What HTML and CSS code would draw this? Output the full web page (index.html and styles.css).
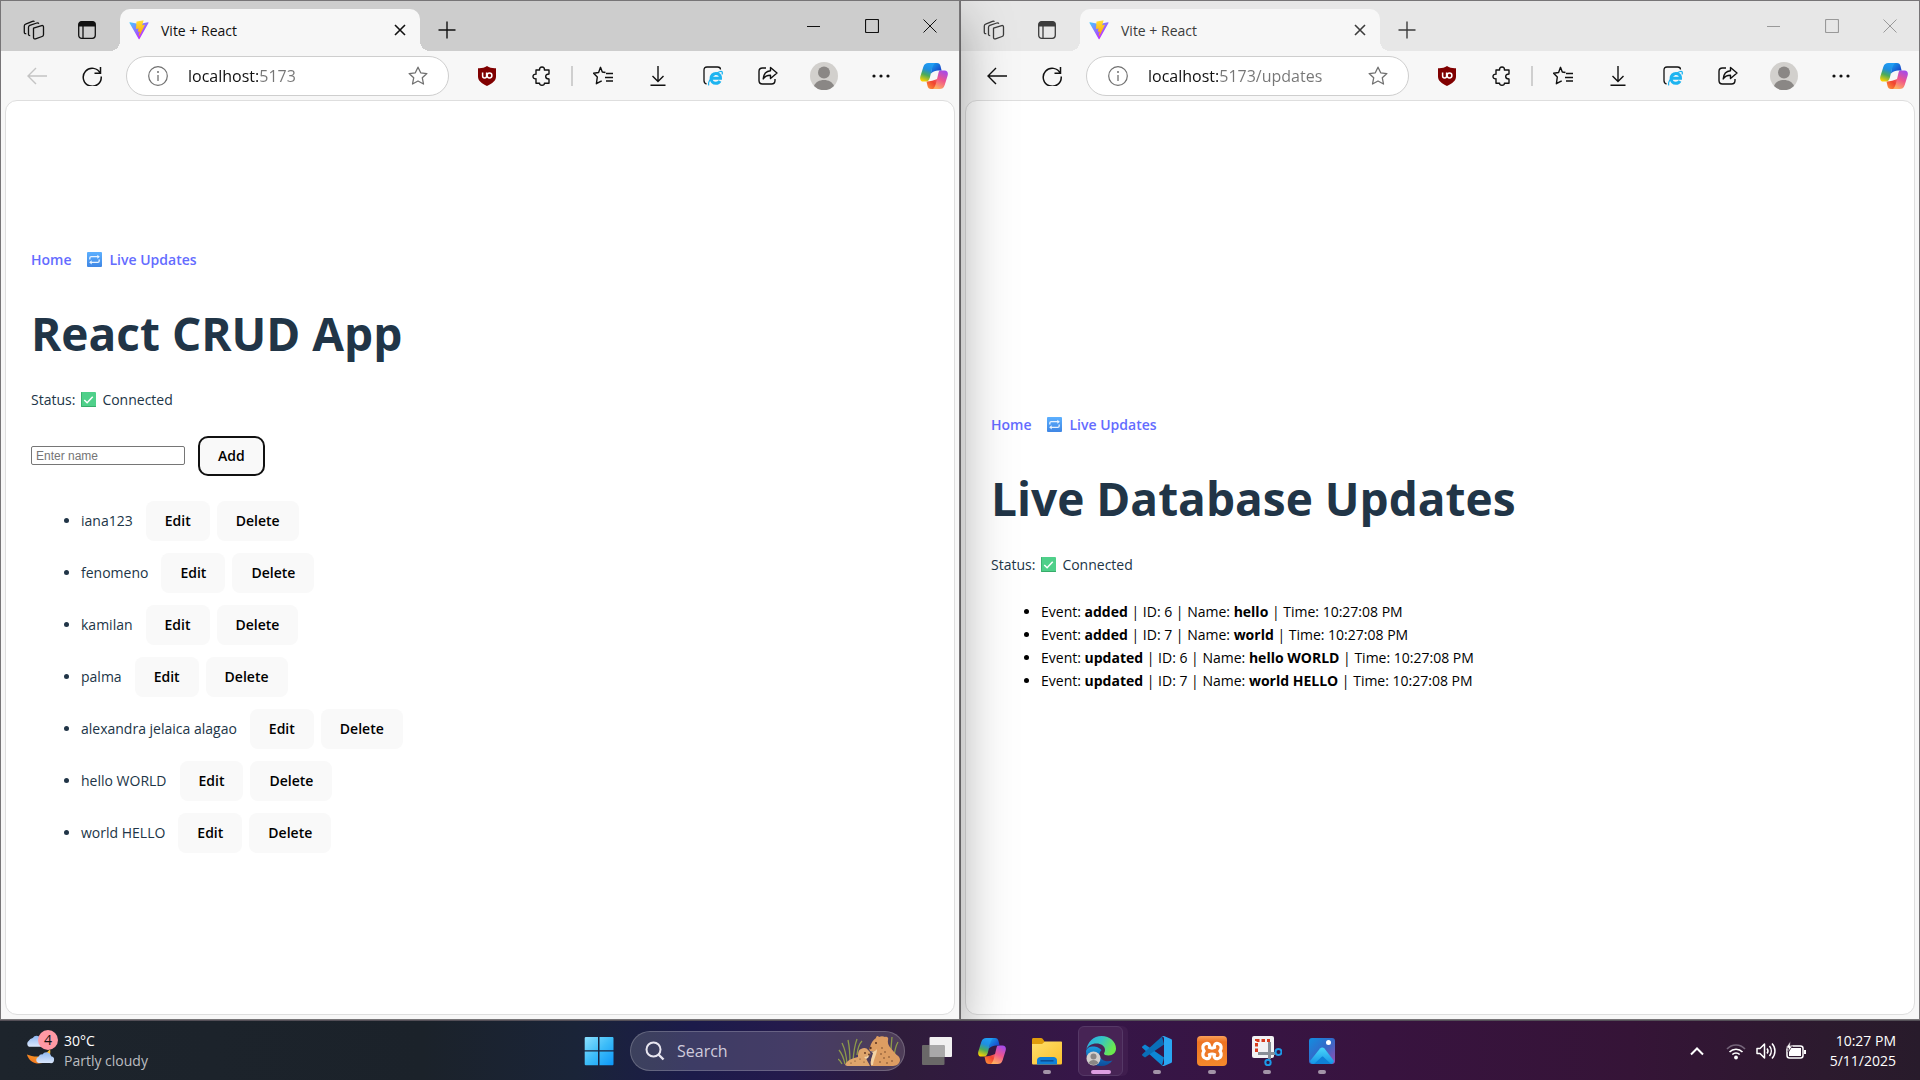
FILE: index.html
```html
<!DOCTYPE html>
<html lang="en">
<head>
<meta charset="utf-8">
<meta name="viewport" content="width=device-width, initial-scale=1">
<title>Vite + React</title>
<link rel="stylesheet" href="styles.css">
</head>
<body>
<svg class="sprite" aria-hidden="true">
  <defs>
    <linearGradient id="viteA" x1="6" y1="33" x2="235" y2="344" gradientUnits="userSpaceOnUse"><stop stop-color="#41D1FF"/><stop offset="1" stop-color="#BD34FE"/></linearGradient>
    <linearGradient id="viteB" x1="194" y1="9" x2="236" y2="293" gradientUnits="userSpaceOnUse"><stop stop-color="#FFEA83"/><stop offset=".08" stop-color="#FFDD35"/><stop offset="1" stop-color="#FFA800"/></linearGradient>
    <linearGradient id="copA" x1="0.6" y1="0" x2="0.3" y2="1"><stop stop-color="#1f9df5"/><stop offset=".35" stop-color="#1f8fe0"/><stop offset=".65" stop-color="#4cab5a"/><stop offset="1" stop-color="#fbd100"/></linearGradient>
    <linearGradient id="copB" x1="0" y1="0" x2="1" y2="1"><stop stop-color="#15a5f0"/><stop offset="1" stop-color="#1a2fc0"/></linearGradient>
    <linearGradient id="copC" x1="0.7" y1="0" x2="0.3" y2="1"><stop stop-color="#a54bea"/><stop offset=".5" stop-color="#f0568a"/><stop offset="1" stop-color="#ffb060"/></linearGradient>
    <linearGradient id="copD" x1="0" y1="1" x2="1" y2="0"><stop stop-color="#ff9c3a"/><stop offset=".6" stop-color="#f0432f"/><stop offset="1" stop-color="#ef5f7e"/></linearGradient>
    <linearGradient id="winG" x1="0" y1="0" x2="1" y2="1"><stop stop-color="#8be0ff"/><stop offset=".5" stop-color="#3cbcf8"/><stop offset="1" stop-color="#0c96f8"/></linearGradient>
    <linearGradient id="foldG" x1="0" y1="0" x2="1" y2="1"><stop stop-color="#ffdf6b"/><stop offset="1" stop-color="#fbc02d"/></linearGradient>
    <linearGradient id="edgeG" x1="0" y1="0" x2="1" y2=".4"><stop stop-color="#2aa8e8"/><stop offset=".5" stop-color="#34c4c8"/><stop offset="1" stop-color="#6be84e"/></linearGradient>
    <linearGradient id="edgeB" x1="0" y1="0" x2="0" y2="1"><stop stop-color="#1b9ae0"/><stop offset="1" stop-color="#0c4c9c"/></linearGradient>
    <linearGradient id="photoG" x1="0" y1="0" x2="1" y2="1"><stop stop-color="#128ee0"/><stop offset=".5" stop-color="#3468c8"/><stop offset="1" stop-color="#9a4dae"/></linearGradient>
    <linearGradient id="photoM" x1="0" y1="0" x2="0" y2="1"><stop stop-color="#4ad8fb"/><stop offset="1" stop-color="#1593e6"/></linearGradient>
    <linearGradient id="xamG" x1="0" y1="0" x2="0" y2="1"><stop stop-color="#f9a05a"/><stop offset=".2" stop-color="#ee7322"/><stop offset="1" stop-color="#f58a2c"/></linearGradient>
    <linearGradient id="cloudG" x1="0" y1="0" x2="0" y2="1"><stop stop-color="#8fb8f2"/><stop offset="1" stop-color="#dbe7fc"/></linearGradient>
    <linearGradient id="moonG" x1="0" y1="1" x2="1" y2="0"><stop stop-color="#f26a1b"/><stop offset="1" stop-color="#fdc534"/></linearGradient>
    <linearGradient id="blueTile" x1="0" y1="0" x2="0" y2="1"><stop stop-color="#5cb0ff"/><stop offset="1" stop-color="#3f86e4"/></linearGradient>
  </defs>
  <symbol id="i-spaces" viewBox="0 0 22 20"><g fill="none" stroke="currentColor" stroke-width="1.3" stroke-linejoin="round"><path d="M10.500 8.200l8.200-2.600c1-.3 1.800.3 1.800 1.300v7.600c0 1-.5 1.700-1.400 2l-6.600 2.300c-1.100.4-2-.2-2-1.300z"/><path d="M7.200 15.600c-.9.100-1.700-.4-1.700-1.400V7.300c0-1 .5-1.600 1.300-1.900l7-2.400c1-.3 1.700 0 2 .8"/><path d="M3.300 13.600c-1.300.3-2-.3-2-1.300V6c0-1 .5-1.600 1.300-1.900L9.500 1.300c.9-.3 1.600-.1 1.900.5"/></g></symbol>
  <symbol id="i-tabs" viewBox="0 0 18 18"><rect x=".7" y=".7" width="16.600" height="16.600" rx="3" fill="none" stroke="currentColor" stroke-width="1.300"/><path d="M.7 5.500V3.500a3 3 0 0 1 3-3h10.600a3 3 0 0 1 3 3v2z" fill="currentColor"/><path d="M5 5v12" stroke="currentColor" stroke-width="1.300"/></symbol>
  <symbol id="i-vite" viewBox="0 0 410 404"><path fill="url(#viteA)" d="M399.641 59.525L215.643 388.545C211.844 395.338 202.084 395.378 198.228 388.618L10.582 59.556C6.381 52.190 12.680 43.267 21.028 44.759L205.223 77.682C206.398 77.892 207.601 77.890 208.776 77.676L389.119 44.806C397.439 43.289 403.768 52.143 399.641 59.525Z"/><path fill="url(#viteB)" d="M292.965 1.574L156.801 28.255C154.563 28.694 152.906 30.590 152.771 32.866L144.395 174.330C144.198 177.662 147.258 180.248 150.510 179.498L188.420 170.749C191.967 169.931 195.172 173.055 194.443 176.622L183.180 231.775C182.422 235.487 185.907 238.661 189.532 237.560L212.947 230.446C216.577 229.344 220.065 232.527 219.297 236.242L201.398 322.875C200.278 328.294 207.486 331.249 210.492 326.603L212.500 323.500L323.454 102.072C325.312 98.365 322.108 94.137 318.036 94.923L279.014 102.454C275.347 103.161 272.227 99.746 273.262 96.158L298.731 7.867C299.767 4.273 296.636 .855 292.965 1.574Z"/></symbol>
  <symbol id="i-x" viewBox="0 0 12 12"><path d="M1 1l10 10M11 1L1 11" stroke="currentColor" stroke-width="1.600" fill="none"/></symbol>
  <symbol id="i-plus" viewBox="0 0 18 18"><path d="M9 .5v17M.5 9h17" stroke="currentColor" stroke-width="1.400"/></symbol>
  <symbol id="i-min" viewBox="0 0 14 14"><path d="M0 7.500h13" stroke="currentColor"/></symbol>
  <symbol id="i-max" viewBox="0 0 14 14"><rect x=".5" y=".5" width="13" height="13" rx="1" fill="none" stroke="currentColor" stroke-width="1.200"/></symbol>
  <symbol id="i-close" viewBox="0 0 14 14"><path d="M.5 .5l13 13M13.500 .5l-13 13" stroke="currentColor" fill="none"/></symbol>
  <symbol id="i-back" viewBox="0 0 20 18"><path d="M20 9H1M9 1L1 9l8 8" stroke="currentColor" stroke-width="1.400" fill="none"/></symbol>
  <symbol id="i-reload" viewBox="0 0 20 20"><path d="M18.400 7.500A9 9 0 1 0 19.200 10.500M18.500 1v6.300h-6" stroke="currentColor" stroke-width="1.500" fill="none"/></symbol>
  <symbol id="i-info" viewBox="0 0 20 20"><circle cx="10" cy="10" r="9.300" fill="none" stroke="#707070" stroke-width="1.200"/><path d="M10 9v6" stroke="#707070" stroke-width="1.300"/><circle cx="10" cy="6" r="1" fill="#707070"/></symbol>
  <symbol id="i-star" viewBox="0 0 20 20"><path d="M10 1.200l2.700 5.600 6.200.8-4.600 4.200 1.200 6.200L10 15l-5.500 3 1.200-6.200L1.100 7.600l6.200-.8z" fill="none" stroke="#707070" stroke-width="1.300" stroke-linejoin="round"/></symbol>
  <symbol id="i-shield" viewBox="0 0 18 20"><path d="M9 0c2.500 1.700 5.500 2.400 9 2.200v8.300c0 4.200-3.600 6.900-9 9.500-5.400-2.600-9-5.300-9-9.500V2.200C3.500 2.400 6.500 1.700 9 0z" fill="#800000"/><path d="M4.600 6.500v3.600a2 2 0 0 0 4 0V6.500" fill="none" stroke="#fff" stroke-width="1.500"/><circle cx="11.500" cy="9.500" r="2.400" fill="none" stroke="#fff" stroke-width="1.500"/></symbol>
  <symbol id="i-puzzle" viewBox="0 0 20 20"><path d="M4 4h3.600c-.3-2 .8-3 2.400-3s2.700 1 2.400 3H17v4c-2 0-3.300.8-3.300 2.500S15 13 17 13v4.200h-4.600c.2 1.400-.8 2-2.400 2s-2.600-.6-2.400-2H4v-4.400c-2 .2-3-.8-3-2.300S2 8 4 8.200z" fill="none" stroke="currentColor" stroke-width="1.400" stroke-linejoin="round"/></symbol>
  <symbol id="i-favs" viewBox="0 0 20 20"><path d="M12.500 6.500L9.300 6 7.500 1.300 5.600 6.500l-5 .7 3.700 3.900-.9 6.600 5.300-2.900M13 7.500h7M12 11.500h8M13 15h7" fill="none" stroke="currentColor" stroke-width="1.400" stroke-linejoin="round"/></symbol>
  <symbol id="i-down" viewBox="0 0 16 20"><path d="M8 0v15.500M2.500 10L8 15.500l5.500-5.500M.5 19.300h15" fill="none" stroke="currentColor" stroke-width="1.400"/></symbol>
  <symbol id="i-ie" viewBox="0 0 20 20"><path d="M3.500 18C1.500 17.500 1 16 1 14.500V4c0-2 1-3 3-3h10.500c2 0 3 .8 3 2.500" fill="none" stroke="currentColor" stroke-width="1.300"/><path d="M8.500 12.300h9c.1-3-1.800-4.900-4.600-4.900s-4.800 2-4.800 4.900 1.900 5 4.800 5c2 0 3.400-.9 4.100-2.300" fill="none" stroke="#1eb4f0" stroke-width="3"/><path d="M6 19.400c-1.500-1.700 1-7 5-10.400s7.700-4.400 8.300-2.800c.3.700.1 1.400-.4 2.300" fill="none" stroke="#1eb4f0" stroke-width="1.200"/></symbol>
  <symbol id="i-share" viewBox="0 0 20 20"><path d="M8 2H4.500C2.300 2 1 3.300 1 5.500v9C1 16.700 2.300 18 4.500 18h9c2.200 0 3.500-1.300 3.500-3.500V13" fill="none" stroke="currentColor" stroke-width="1.400"/><path d="M12.500 1.500L19 7l-6.500 5.500V9.300c-3.600 0-5.700 1-7.300 3.700.4-4.800 3-7.900 7.300-8.200z" fill="none" stroke="currentColor" stroke-width="1.400" stroke-linejoin="round"/></symbol>
  <symbol id="i-user" viewBox="0 0 28 28"><circle cx="14" cy="14" r="14" fill="#d2d0cd"/><circle cx="14" cy="10.500" r="6" fill="#8a8785"/><path d="M4 24c1.500-4 5.500-6 10-6s8.500 2 10 6a14 14 0 0 1-20 0z" fill="#8a8785"/></symbol>
  <symbol id="i-dots" viewBox="0 0 18 4"><g fill="currentColor"><circle cx="2" cy="2" r="1.600"/><circle cx="9" cy="2" r="1.600"/><circle cx="16" cy="2" r="1.600"/></g></symbol>
  <symbol id="i-copilot" viewBox="0 0 28 27"><path fill="url(#copD)" d="M16 26.500h-5c-2 0-3-1-3.500-3L6.500 19c4 0 7-1 12-3z"/><path fill="url(#copC)" d="M20 8h4.500c3 0 3.900 2.300 3.100 5.300L24.700 22.500c-1 3-2.500 4-5 4H13c2-1.700 2.700-4.500 3.700-8.500l1.400-6c.6-2.700 1-4 1.900-4z"/><path fill="url(#copB)" d="M12 .5h5c2 0 3 1 3.500 3L21.600 8H18c-2.500 0-4.500.7-7 3z"/><path fill="url(#copA)" d="M8.200 .5H15c-2 1.700-2.700 4.500-3.700 8.500L9.900 15c-.7 2.800-1.900 4-3.900 4H3.500c-3 0-3.900-2.300-3.100-5.300L3.300 4.500c1-3 2.500-4 4.900-4z"/></symbol>
  <symbol id="i-repeat" viewBox="0 0 16 16"><rect width="16" height="16" rx="1" fill="url(#blueTile)"/><path d="M3 8V6.500C3 5.500 3.500 5 4.500 5H12M13 8v1.500c0 1-.5 1.500-1.500 1.500H4" stroke="#e8f3ff" stroke-width="1.400" fill="none"/><path d="M11 2.800L13.700 5 11 7.200zM5 8.800L2.300 11 5 13.200z" fill="#e8f3ff"/></symbol>
  <symbol id="i-check" viewBox="0 0 16 16"><rect width="16" height="16" rx="1" fill="#4fd08a"/><path d="M.3 0v15.500H16" stroke="#35a768" stroke-width="1" fill="none"/><path d="M3.500 8.500l3 3 6-6.500" stroke="#fff" stroke-width="1.600" fill="none"/></symbol>
</svg>

<main class="desktop">
  <section class="window window--active">
    <header class="titlebar">
      <div class="titlebar__tools">
        <button class="icon-btn" aria-label="Workspaces"><svg class="ic22"><use href="#i-spaces"/></svg></button>
        <button class="icon-btn" aria-label="Tab actions"><svg class="ic18"><use href="#i-tabs"/></svg></button>
      </div>
      <div class="tab">
        <svg class="ic20"><use href="#i-vite"/></svg>
        <span class="tab__title">Vite + React</span>
        <button class="tab__close" aria-label="Close tab"><svg class="ic12"><use href="#i-x"/></svg></button>
      </div>
      <button class="icon-btn" aria-label="New tab"><svg class="ic18"><use href="#i-plus"/></svg></button>
      <div class="caption">
        <button class="icon-btn" aria-label="Minimize"><svg class="ic14"><use href="#i-min"/></svg></button>
        <button class="icon-btn" aria-label="Maximize"><svg class="ic14"><use href="#i-max"/></svg></button>
        <button class="icon-btn" aria-label="Close"><svg class="ic14"><use href="#i-close"/></svg></button>
      </div>
    </header>
    <nav class="toolbar" aria-label="Browser toolbar">
      <button class="icon-btn" aria-label="Back" disabled><svg class="ic20"><use href="#i-back"/></svg></button>
      <button class="icon-btn" aria-label="Refresh"><svg class="ic20"><use href="#i-reload"/></svg></button>
      <div class="address">
        <svg class="ic20"><use href="#i-info"/></svg>
        <input class="address__input" type="text" aria-label="Address" value="localhost:5173">
        <svg class="ic20"><use href="#i-star"/></svg>
      </div>
      <button class="icon-btn" aria-label="uBlock Origin"><svg class="ic20"><use href="#i-shield"/></svg></button>
      <button class="icon-btn" aria-label="Extensions"><svg class="ic20"><use href="#i-puzzle"/></svg></button>
      <span class="toolbar__sep"></span>
      <button class="icon-btn" aria-label="Favorites"><svg class="ic20"><use href="#i-favs"/></svg></button>
      <button class="icon-btn" aria-label="Downloads"><svg class="ic20"><use href="#i-down"/></svg></button>
      <button class="icon-btn" aria-label="Internet Explorer mode"><svg class="ic20"><use href="#i-ie"/></svg></button>
      <button class="icon-btn" aria-label="Share"><svg class="ic20"><use href="#i-share"/></svg></button>
      <button class="icon-btn icon-btn--wide" aria-label="Profile"><svg class="ic28"><use href="#i-user"/></svg></button>
      <button class="icon-btn icon-btn--wide" aria-label="Settings and more"><svg class="ic18"><use href="#i-dots"/></svg></button>
      <button class="icon-btn icon-btn--last" aria-label="Copilot"><svg class="ic28"><use href="#i-copilot"/></svg></button>
    </nav>
    <div class="page">
      <nav class="links">
        <a href="#home">Home</a>
        <a href="#updates"><svg class="emoji"><use href="#i-repeat"/></svg>Live Updates</a>
      </nav>
      <h1>React CRUD App</h1>
      <p class="status">Status: <svg class="emoji"><use href="#i-check"/></svg>Connected</p>
      <form class="add-form">
        <input class="name-input" type="text" placeholder="Enter name" aria-label="Name">
        <button class="btn btn--focus" type="button">Add</button>
      </form>
      <ul class="people">
        <li><div class="person"><span>iana123</span><button class="btn">Edit</button><button class="btn">Delete</button></div></li>
        <li><div class="person"><span>fenomeno</span><button class="btn">Edit</button><button class="btn">Delete</button></div></li>
        <li><div class="person"><span>kamilan</span><button class="btn">Edit</button><button class="btn">Delete</button></div></li>
        <li><div class="person"><span>palma</span><button class="btn">Edit</button><button class="btn">Delete</button></div></li>
        <li><div class="person"><span>alexandra jelaica alagao</span><button class="btn">Edit</button><button class="btn">Delete</button></div></li>
        <li><div class="person"><span>hello WORLD</span><button class="btn">Edit</button><button class="btn">Delete</button></div></li>
        <li><div class="person"><span>world HELLO</span><button class="btn">Edit</button><button class="btn">Delete</button></div></li>
      </ul>
    </div>
  </section>

  <section class="window">
    <header class="titlebar">
      <div class="titlebar__tools">
        <button class="icon-btn" aria-label="Workspaces"><svg class="ic22"><use href="#i-spaces"/></svg></button>
        <button class="icon-btn" aria-label="Tab actions"><svg class="ic18"><use href="#i-tabs"/></svg></button>
      </div>
      <div class="tab">
        <svg class="ic20"><use href="#i-vite"/></svg>
        <span class="tab__title">Vite + React</span>
        <button class="tab__close" aria-label="Close tab"><svg class="ic12"><use href="#i-x"/></svg></button>
      </div>
      <button class="icon-btn" aria-label="New tab"><svg class="ic18"><use href="#i-plus"/></svg></button>
      <div class="caption">
        <button class="icon-btn" aria-label="Minimize"><svg class="ic14"><use href="#i-min"/></svg></button>
        <button class="icon-btn" aria-label="Maximize"><svg class="ic14"><use href="#i-max"/></svg></button>
        <button class="icon-btn" aria-label="Close"><svg class="ic14"><use href="#i-close"/></svg></button>
      </div>
    </header>
    <nav class="toolbar" aria-label="Browser toolbar">
      <button class="icon-btn" aria-label="Back"><svg class="ic20"><use href="#i-back"/></svg></button>
      <button class="icon-btn" aria-label="Refresh"><svg class="ic20"><use href="#i-reload"/></svg></button>
      <div class="address">
        <svg class="ic20"><use href="#i-info"/></svg>
        <input class="address__input" type="text" aria-label="Address" value="localhost:5173/updates">
        <svg class="ic20"><use href="#i-star"/></svg>
      </div>
      <button class="icon-btn" aria-label="uBlock Origin"><svg class="ic20"><use href="#i-shield"/></svg></button>
      <button class="icon-btn" aria-label="Extensions"><svg class="ic20"><use href="#i-puzzle"/></svg></button>
      <span class="toolbar__sep"></span>
      <button class="icon-btn" aria-label="Favorites"><svg class="ic20"><use href="#i-favs"/></svg></button>
      <button class="icon-btn" aria-label="Downloads"><svg class="ic20"><use href="#i-down"/></svg></button>
      <button class="icon-btn" aria-label="Internet Explorer mode"><svg class="ic20"><use href="#i-ie"/></svg></button>
      <button class="icon-btn" aria-label="Share"><svg class="ic20"><use href="#i-share"/></svg></button>
      <button class="icon-btn icon-btn--wide" aria-label="Profile"><svg class="ic28"><use href="#i-user"/></svg></button>
      <button class="icon-btn icon-btn--wide" aria-label="Settings and more"><svg class="ic18"><use href="#i-dots"/></svg></button>
      <button class="icon-btn icon-btn--last" aria-label="Copilot"><svg class="ic28"><use href="#i-copilot"/></svg></button>
    </nav>
    <div class="page">
      <nav class="links">
        <a href="#home">Home</a>
        <a href="#updates"><svg class="emoji"><use href="#i-repeat"/></svg>Live Updates</a>
      </nav>
      <h1>Live Database Updates</h1>
      <p class="status">Status: <svg class="emoji"><use href="#i-check"/></svg>Connected</p>
      <ul class="events">
        <li>Event: <strong>added</strong> | ID: 6 | Name: <strong>hello</strong> | Time: 10:27:08 PM</li>
        <li>Event: <strong>added</strong> | ID: 7 | Name: <strong>world</strong> | Time: 10:27:08 PM</li>
        <li>Event: <strong>updated</strong> | ID: 6 | Name: <strong>hello WORLD</strong> | Time: 10:27:08 PM</li>
        <li>Event: <strong>updated</strong> | ID: 7 | Name: <strong>world HELLO</strong> | Time: 10:27:08 PM</li>
      </ul>
    </div>
  </section>
</main>

<footer class="taskbar">
  <button class="weather">
    <span class="weather__art">
      <svg class="weather__icon" viewBox="0 0 32 32"><path d="M5 12h13a4 4 0 0 0 0-7 5 5 0 0 0-9-2 5 5 0 0 0-4 3 3.500 3.500 0 0 0 0 6z" fill="url(#cloudG)"/><path d="M3 20c2 7 9 11 16 9 6-2 9-8 8-14-3 2-5 6-10 7-6 1-10-1-14-2z" fill="url(#moonG)"/><path d="M15 29h12a3.500 3.500 0 0 0 1-7 5 5 0 0 0-9-2 4 4 0 0 0-4 2.500 3.400 3.400 0 0 0 0 6.500z" fill="url(#cloudG)"/></svg>
      <span class="badge">4</span>
    </span>
    <span class="weather__text"><span>30°C</span><span class="weather__sub">Partly cloudy</span></span>
  </button>

  <div class="dock">
    <button class="dock__app" aria-label="Start"><svg class="ic30" viewBox="0 0 30 30"><g fill="url(#winG)"><path d="M1.500 1H14v13.300H.7V1.800zM15.500 1h13.300l.7.800v12.500h-14zM.7 15.500H14v13.800H1.500l-.8-.8zM15.500 15.500h14v13l-.7.800H15.500z"/></g></svg></button>
    <label class="search">
      <svg class="ic20" viewBox="0 0 20 20"><circle cx="8.500" cy="8.500" r="7" fill="none" stroke="#e8e6f0" stroke-width="2"/><path d="M13.500 13.500l5 5" stroke="#e8e6f0" stroke-width="2.400"/></svg>
      <input class="search__input" type="text" placeholder="Search">
      <svg class="search__art" viewBox="0 0 62 32" aria-hidden="true">
        <g stroke="#8d9a4a" stroke-width="1.300" fill="none"><path d="M7 29Q5 20 1 15M9 29Q8 16 4 8M12 28Q12 14 10 5M15 26Q16 12 19 4M19 20Q20 10 24 6M4 29Q2 25 0 24M50 20Q49 10 47 4M53 20Q53 10 54 2M56 22Q57 12 60 7"/></g>
        <path d="M33 31c-1-5 1-9 3-13 0-2-1-2-4-2-1-2-1-3 0-4 1-4 3-7 6-9 0-2 2-3 3-1 2-1 4-1 6 0 2-1 4 1 3 3-1 5 3 8 6 12 3 4 6 4 6 8 0 3-3 6-7 6z" fill="#dd9d62"/>
        <path d="M7 30c2-5 8-7 13-8 0-3 0-7 3-8 3-2 6-1 7 1 2 2 3 3 2 5-1 1-3 1-4 2 0 3 3 6 4 9H9z" fill="#dfa56c"/>
        <path d="M32 16c2 1 5 1 7-2 0 5-3 9-4 16h-2c-1-4 1-8 2-12z" fill="#f3d3a4"/>
        <path d="M26 22c2 0 3-1 5-2 0 2-1 3-3 4z" fill="#f3d3a4"/>
        <g fill="#5d3520"><circle cx="38" cy="8" r="1"/><circle cx="32.500" cy="13" r="1.200"/><circle cx="27" cy="18" r=".9"/><circle cx="31" cy="19.500" r=".9"/><circle cx="44" cy="13" r=".7"/><circle cx="47" cy="17" r=".7"/><circle cx="43" cy="19" r=".7"/><circle cx="51" cy="22" r=".7"/><circle cx="46" cy="23" r=".7"/><circle cx="54" cy="26" r=".7"/><circle cx="49" cy="28" r=".7"/><circle cx="42" cy="27" r=".7"/><circle cx="17" cy="26" r=".6"/><circle cx="22" cy="24" r=".6"/><circle cx="26" cy="27" r=".6"/><circle cx="13" cy="28" r=".6"/></g>
      </svg>
    </label>
    <button class="dock__app" aria-label="Task view"><svg class="ic30" viewBox="0 0 30 30"><rect x="7.500" y="1" width="22.500" height="20" rx="1" fill="#f1f0f1"/><rect y="9" width="22.500" height="20" rx="1" fill="#6a6868"/><path d="M7.500 9h14a1 1 0 0 1 1 1v11h-15z" fill="#a9a8a9"/></svg></button>
    <button class="dock__app" aria-label="Copilot"><svg class="ic28"><use href="#i-copilot"/></svg></button>
    <button class="dock__app dock__app--open" aria-label="File Explorer"><svg class="ic30" viewBox="0 0 30 30"><path d="M0 3.500C0 2.500.6 2 1.500 2h7c1 0 1.600.3 2.300 1L13 6v6H0z" fill="#e09c0c"/><path d="M0 8h10l3-2.500h16c.6 0 1 .4 1 1V27c0 1-.6 1.500-1.500 1.500h-27C.6 28.500 0 28 0 27z" fill="url(#foldG)"/><path d="M5 28.500v-4c0-2 1.500-3.500 3.500-3.500h13c2 0 3.500 1.500 3.500 3.500v4z" fill="#1080d8"/><path d="M8.500 24.800h13" stroke="#0c4c94" stroke-width="1.500"/></svg></button>
    <button class="dock__app dock__app--open dock__app--active" aria-label="Microsoft Edge"><svg class="ic30" viewBox="0 0 30 30"><path d="M0 15c0 9 6.500 15 15 15 5 0 9-2 11.500-5.500-7 2.500-13-1-13-6 0-2 .8-3.300 2-4.300C13 10 2 8 0 15z" fill="url(#edgeB)"/><path d="M.3 14C1.500 6 7.500 0 15.500 0 24 0 30 6 30 12.500c0 4-3 7-7.500 7-3 0-4.500-1-4.500-2 0-.7 1-1.500 1-3.500C19 10 15 7.500 10.500 7.500 5.500 7.500 1.500 10 .3 14z" fill="url(#edgeG)"/><circle cx="7.500" cy="22.500" r="7" fill="#d2d0cd"/><circle cx="7.500" cy="20.500" r="3" fill="#8a8785"/><path d="M2.500 27c1-2 3-3 5-3s4 1 5 3a7 7 0 0 1-10 0z" fill="#8a8785"/></svg></button>
    <button class="dock__app dock__app--open" aria-label="Visual Studio Code"><svg class="ic30" viewBox="0 0 30 30"><path d="M3 8.500L.5 10.300c-.6.500-.6 1.200 0 1.700L20 29.500l2-8z" fill="#0d86d4"/><path d="M3 21.500L.5 19.700c-.6-.5-.6-1.200 0-1.700L20 .5l2 8z" fill="#0a6fb8"/><path d="M22 0l7 3c.7.300 1 .8 1 1.500v21c0 .7-.3 1.200-1 1.500l-7 3c-1 .3-2-.3-2.500-1 1.200.5 2.500.2 2.500-1.500v-25C22 .800 20.700.500 19.500 1c.5-.7 1.500-1.300 2.500-1z" fill="#2aa6f2"/></svg></button>
    <button class="dock__app dock__app--open" aria-label="XAMPP Control Panel"><svg class="ic30" viewBox="0 0 30 30"><rect width="30" height="30" rx="4" fill="url(#xamG)"/><path d="M9 7.500c3-1 4 2 3.500 4 1 .7 4 .7 5 0-.5-2 .5-5 3.500-4 3.500 1 4 4.500 2 7.500 2 3 1.500 6.500-2 7.500-3 .8-4.500-1.500-3.500-4-1-.7-4-.7-5 0 1 2.500-.5 4.800-3.500 4-3.500-1-4-4.500-2-7.500-2-3-1.500-6.500 2-7.500z" fill="#ee7a28" stroke="#fff" stroke-width="3.200"/></svg></button>
    <button class="dock__app dock__app--open" aria-label="Snipping Tool"><svg class="ic30" viewBox="0 0 30 30"><rect width="22" height="22" rx="2" fill="#f2f2f4"/><path d="M4.500 16V4.500H18" fill="none" stroke="#d83b1e" stroke-width="3" stroke-dasharray="3.500 2"/><path d="M17.500 6v17M6 17.500h17" stroke="#8a9098" stroke-width="3"/><circle cx="26.500" cy="16" r="3" fill="none" stroke="#1c9ae8" stroke-width="2"/><circle cx="16" cy="26.500" r="2.700" fill="none" stroke="#1c9ae8" stroke-width="2"/></svg></button>
    <button class="dock__app dock__app--open" aria-label="Photos"><svg class="ic26" viewBox="0 0 26 26"><rect width="26" height="26" rx="3" fill="url(#photoG)"/><path d="M1 23L11 10.500c1.500-1.500 3-1.500 4.500 0L25 23c-.5 2-1.500 3-3 3H4c-1.500 0-2.500-1-3-3z" fill="url(#photoM)"/><path d="M5 26l7.500-7c.8-.6 1.400-.6 2 0L22 26z" fill="#0f80d8"/><circle cx="19.500" cy="4.500" r="2.500" fill="#fff"/></svg></button>
  </div>

  <div class="tray">
    <button class="tray__btn" aria-label="Show hidden icons"><svg class="ic14" viewBox="0 0 14 14"><path d="M1 10.500l6-6 6 6" fill="none" stroke="#fff" stroke-width="2"/></svg></button>
    <button class="tray__group" aria-label="Network, volume and battery">
      <svg class="ic20" viewBox="0 0 20 20"><g fill="none" stroke="#fff" stroke-width="1.600"><path d="M1 8a12 12 0 0 1 18 0" stroke="#75657a"/><path d="M3.500 11a9 9 0 0 1 13 0M6.300 13.500a5.500 5.500 0 0 1 7.400 0"/></g><circle cx="10" cy="16.500" r="1.900" fill="#fff"/></svg>
      <svg class="ic20" viewBox="0 0 20 20"><g fill="none" stroke="#fff" stroke-width="1.500"><path d="M1 7.500h3L8.500 3v14L4 12.500H1z" stroke-linejoin="round"/><path d="M11 7.500a4 4 0 0 1 0 5M13.500 5a8 8 0 0 1 0 10M16 2.500a11 11 0 0 1 0 15"/></g></svg>
      <svg class="ic20" viewBox="0 0 20 20"><rect x="1" y="5" width="16" height="12" rx="2.500" fill="none" stroke="#fff" stroke-width="1.500"/><path d="M5 7h10v8H3v-4z" fill="#fff"/><path d="M18 9h2v4h-2z" fill="#fff"/><path d="M4.500 0L0 7h2.500L2 11l4.500-6H4z" fill="#fff" stroke="#2f1930" stroke-width=".6"/></svg>
    </button>
    <button class="clock"><span>10:27 PM</span><span>5/11/2025</span></button>
  </div>
</footer>
</body>
</html>
```

FILE: styles.css
```css
* { box-sizing: border-box; }

body {
  margin: 0;
  min-height: 100vh;
  display: grid;
  grid-template-columns: minmax(0, 1fr);
  grid-template-rows: 1fr auto;
  font-family: "Open Sans", "Noto Sans", sans-serif;
  font-size: 14px;
  color: #213547;
  background: #f7f7f7;
}

button {
  font: inherit;
  color: inherit;
  background: none;
  border: 0;
  padding: 0;
}

.sprite { position: absolute; width: 0; height: 0; }

.ic12 { width: 12px; height: 12px; }
.ic14 { width: 14px; height: 14px; }
.ic18 { width: 18px; height: 18px; }
.ic20 { width: 20px; height: 20px; flex: none; }
.ic22 { width: 22px; height: 20px; }
.ic26 { width: 26px; height: 26px; }
.ic28 { width: 28px; height: 28px; }
.ic30 { width: 30px; height: 30px; }

/* Browser windows */
.desktop {
  display: grid;
  grid-template-columns: repeat(2, minmax(0, 1fr));
}

.window {
  display: flex;
  flex-direction: column;
  border: 1px solid #777577;
  background: #f7f7f7;
  color: #3c3c3c;
}

.window--active {
  position: relative;
  z-index: 1;
  color: #111;
  box-shadow: 0 20px 50px rgba(0, 0, 0, .35);
}

.titlebar {
  display: flex;
  height: 50px;
  background: #e7e7e7;
}

.window--active .titlebar { background: #cdcdcd; }

.titlebar__tools {
  display: flex;
  padding: 8px 7px 0 6px;
}

.icon-btn {
  display: flex;
  align-items: center;
  justify-content: center;
  width: 53px;
  flex: none;
}

.titlebar > .icon-btn { padding-top: 7px; }

.tab {
  position: relative;
  display: flex;
  align-items: center;
  width: 300px;
  margin-top: 8px;
  padding: 0 14px 0 9px;
  border-radius: 10px 10px 0 0;
  background: #f7f7f7;
}

.tab::before,
.tab::after {
  content: "";
  position: absolute;
  bottom: 0;
  width: 10px;
  height: 10px;
}

.tab::before {
  right: 100%;
  background: radial-gradient(circle at 0 0, transparent 10px, #f7f7f7 10px);
}

.tab::after {
  left: 100%;
  background: radial-gradient(circle at 100% 0, transparent 10px, #f7f7f7 10px);
}

.tab__title {
  flex: 1;
  padding-left: 12px;
}

.tab__close { display: flex; }

.caption {
  display: flex;
  margin-left: auto;
}

.caption .icon-btn { width: 58px; }

.window:not(.window--active) .caption { color: #999; }

.toolbar {
  display: flex;
  align-items: center;
  height: 49px;
  padding-left: 8px;
  color: #111;
}

.toolbar .icon-btn { width: 55px; height: 48px; }
.toolbar .icon-btn--wide { width: 57px; }
.toolbar .icon-btn--last { width: 50px; }
.toolbar .icon-btn:disabled { color: #c4c4c4; }

.toolbar__sep {
  width: 2px;
  height: 20px;
  margin: 0 2px;
  background: #cfcfcf;
}

.address {
  flex: 1;
  min-width: 0;
  display: flex;
  align-items: center;
  gap: 20px;
  height: 40px;
  margin: 0 10px 0 7px;
  padding: 0 20px 0 21px;
  border: 1px solid #cecece;
  border-radius: 20px;
  background: #fff;
}

.address__input {
  flex: 1;
  min-width: 0;
  height: 28px;
  padding: 0;
  border: 0;
  outline: 0;
  font: 16px "Open Sans", "Noto Sans", sans-serif;
  color: #111;
  background: linear-gradient(90deg, #111 70px, #767676 70px) text;
  -webkit-text-fill-color: transparent;
}

/* Page shown inside a window */
.page {
  flex: 1;
  display: flex;
  flex-direction: column;
  justify-content: center;
  margin: 0 4px 4px;
  padding: 28px 25px;
  border: 1px solid #dedede;
  border-radius: 12px;
  background: #fff;
  color: #213547;
  line-height: 23px;
}

.links {
  display: flex;
  gap: 15px;
  font-weight: 600;
}

.links a {
  display: flex;
  align-items: center;
  gap: 8px;
  color: #646cff;
  text-decoration: none;
}

.emoji { width: 15px; height: 15px; flex: none; }

h1 {
  margin: 34px 0 27px;
  font-size: 46px;
  line-height: 56px;
  font-weight: 700;
}

.status {
  display: flex;
  align-items: center;
  gap: 6px;
  margin: 0;
}

.add-form {
  display: flex;
  align-items: center;
  gap: 13px;
  margin-top: 25px;
}

.name-input {
  width: 154px;
  height: 19px;
  padding: 0 4px;
  border: 1px solid #767676;
  border-radius: 2px;
  font: 12px "Liberation Sans", Arial, sans-serif;
}

.btn {
  height: 40px;
  padding: 0 19px;
  border-radius: 8px;
  background: #f9f9f9;
  color: #000;
  font-weight: 600;
}

.btn--focus { padding: 0 18px; border: 2px solid #111; border-radius: 10px; }

ul {
  margin: 0;
  padding-left: 50px;
}

.people { margin: 25px 0 3px; }

.people li {
  margin-bottom: 12px;
  line-height: 40px;
}

.person {
  display: inline-flex;
  align-items: center;
  vertical-align: top;
}

.person .btn { margin-left: 7px; }
.person span + .btn { margin-left: 13px; }

.events {
  margin: 24px 0 11px;
  color: #000;
}

/* Taskbar */
.taskbar {
  position: relative;
  z-index: 2;
  display: grid;
  grid-template-columns: 1fr auto 1fr;
  height: 60px;
  border-top: 1px solid #555058;
  background: linear-gradient(90deg, #1d242c 0%, #1b222a 22%, #1a2438 30%, #1c1b4a 36%, #241a4c 41%, #2f1c3b 47%, #361648 56%, #38133f 72%, #351437 85%, #2c1a2e 95%, #281b2b 100%);
  color: #fff;
}

.weather {
  display: flex;
  align-items: center;
  gap: 9px;
  padding-left: 24px;
  text-align: left;
  line-height: 20px;
}

.weather__art { position: relative; display: flex; }
.weather__icon { width: 31px; height: 31px; }

.badge {
  position: absolute;
  top: -5px;
  right: -3px;
  width: 20px;
  height: 20px;
  border-radius: 50%;
  background: #ff99a4;
  color: #111;
  text-align: center;
}

.weather__text { display: flex; flex-direction: column; }
.weather__sub { color: #bbbdc0; }

.dock { display: flex; align-items: center; }

.dock__app {
  position: relative;
  display: flex;
  align-items: center;
  justify-content: center;
  width: 55px;
  height: 50px;
}

.dock__app--open::after {
  content: "";
  position: absolute;
  left: 50%;
  bottom: 2px;
  width: 8px;
  height: 4px;
  margin-left: -4px;
  border-radius: 2px;
  background: #a394a8;
}

.dock__app--active {
  width: 45px;
  margin: 0 6px 0 4px;
  border: 1px solid #553866;
  border-radius: 6px;
  background: #472455;
  box-shadow: 5px 0 0 #3f1d4e;
}

.dock__app--active::after {
  width: 20px;
  margin-left: -10px;
  bottom: 1px;
  background: #dd9ee2;
}

.search {
  display: flex;
  align-items: center;
  gap: 12px;
  width: 275px;
  height: 40px;
  margin: 0 4px;
  padding: 0 4px 0 14px;
  border: 1px solid rgba(255, 255, 255, .2);
  border-radius: 20px;
  background: rgba(255, 255, 255, .15);
}

.search__input {
  flex: 1;
  min-width: 0;
  padding: 0;
  border: 0;
  outline: 0;
  background: none;
  color: #fff;
  font: 16px "Open Sans", "Noto Sans", sans-serif;
}

.search__input::placeholder { color: #cfcbdc; }
.search__art { width: 62px; height: 32px; flex: none; }

.tray {
  display: flex;
  align-items: center;
  justify-content: flex-end;
  gap: 18px;
  padding-right: 24px;
}

.tray__btn { display: flex; padding: 4px; }
.tray__group { display: flex; align-items: center; gap: 10px; }

.clock {
  display: flex;
  flex-direction: column;
  align-items: flex-end;
  min-width: 72px;
  line-height: 20px;
}
```
